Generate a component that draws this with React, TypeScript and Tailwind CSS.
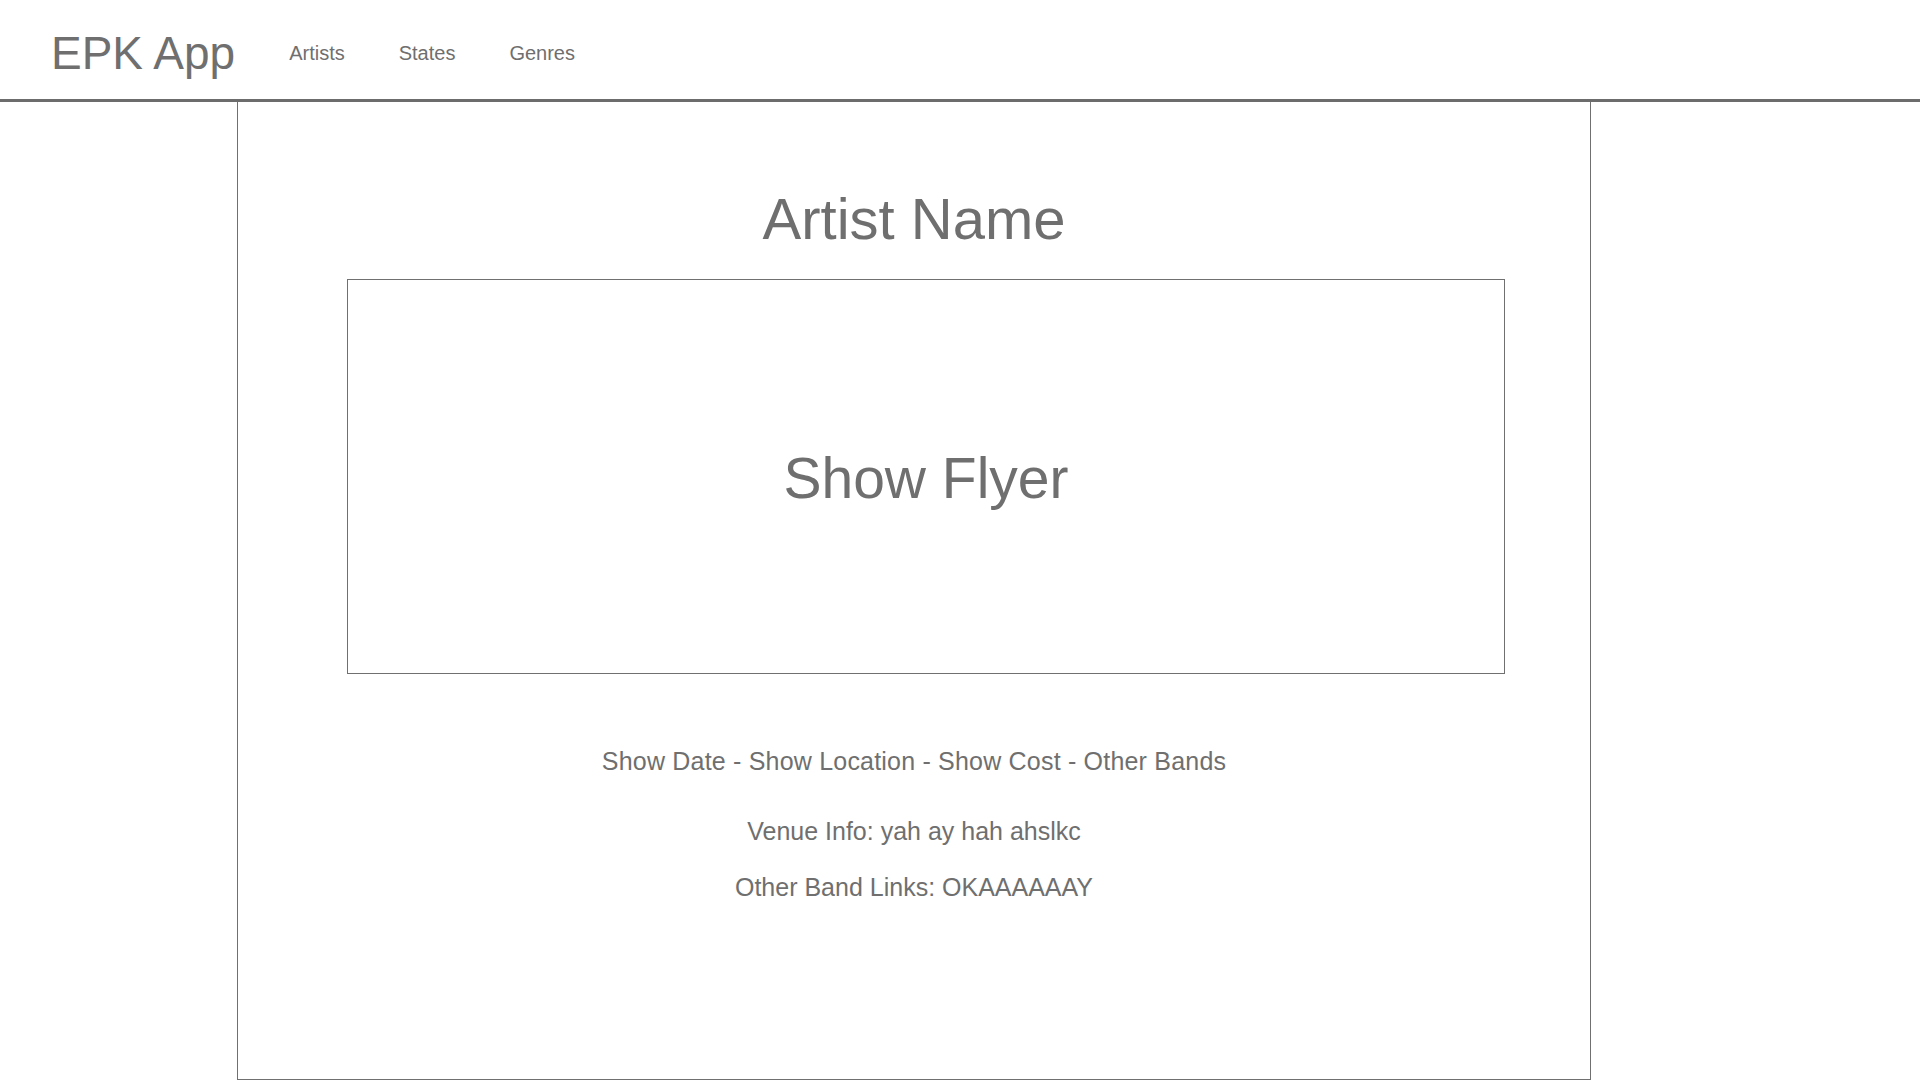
import React from "react";

export default function App() {
  const font = { fontFamily: '"Liberation Sans", Arial, Helvetica, sans-serif' };
  return (
    <div className="min-h-[1080px] w-[1920px] bg-white text-[#6f6f6f] overflow-hidden" style={font}>
      <header className="box-border h-[102px] border-b-[3px] border-[#6c6c6c] flex items-center pl-[51px] pt-[7px] gap-[54px]">
        <div className="text-[46px] leading-none">EPK App</div>
        <nav className="flex items-center gap-[54px] text-[20px] leading-none">
          <a className="cursor-pointer">Artists</a>
          <a className="cursor-pointer">States</a>
          <a className="cursor-pointer">Genres</a>
        </nav>
      </header>
      <main className="box-border ml-[237px] w-[1354px] h-[978px] border-x border-b border-[#707070] flex flex-col">
        <h1 className="pt-[88px] text-center text-[58px] leading-none font-normal">Artist Name</h1>
        <div className="box-border mt-[31px] ml-[109px] w-[1158px] h-[395px] border border-[#707070] flex items-center justify-center pt-[4px]">
          <span className="text-[57px] leading-none">Show Flyer</span>
        </div>
        <p className="mt-[75px] text-center text-[25px] leading-none tracking-[0.2px]">
          Show Date - Show Location - Show Cost - Other Bands
        </p>
        <p className="mt-[45px] text-center text-[25px] leading-none">Venue Info: yah ay hah ahslkc</p>
        <p className="mt-[31px] text-center text-[25px] leading-none">Other Band Links: OKAAAAAAY</p>
      </main>
    </div>
  );
}
